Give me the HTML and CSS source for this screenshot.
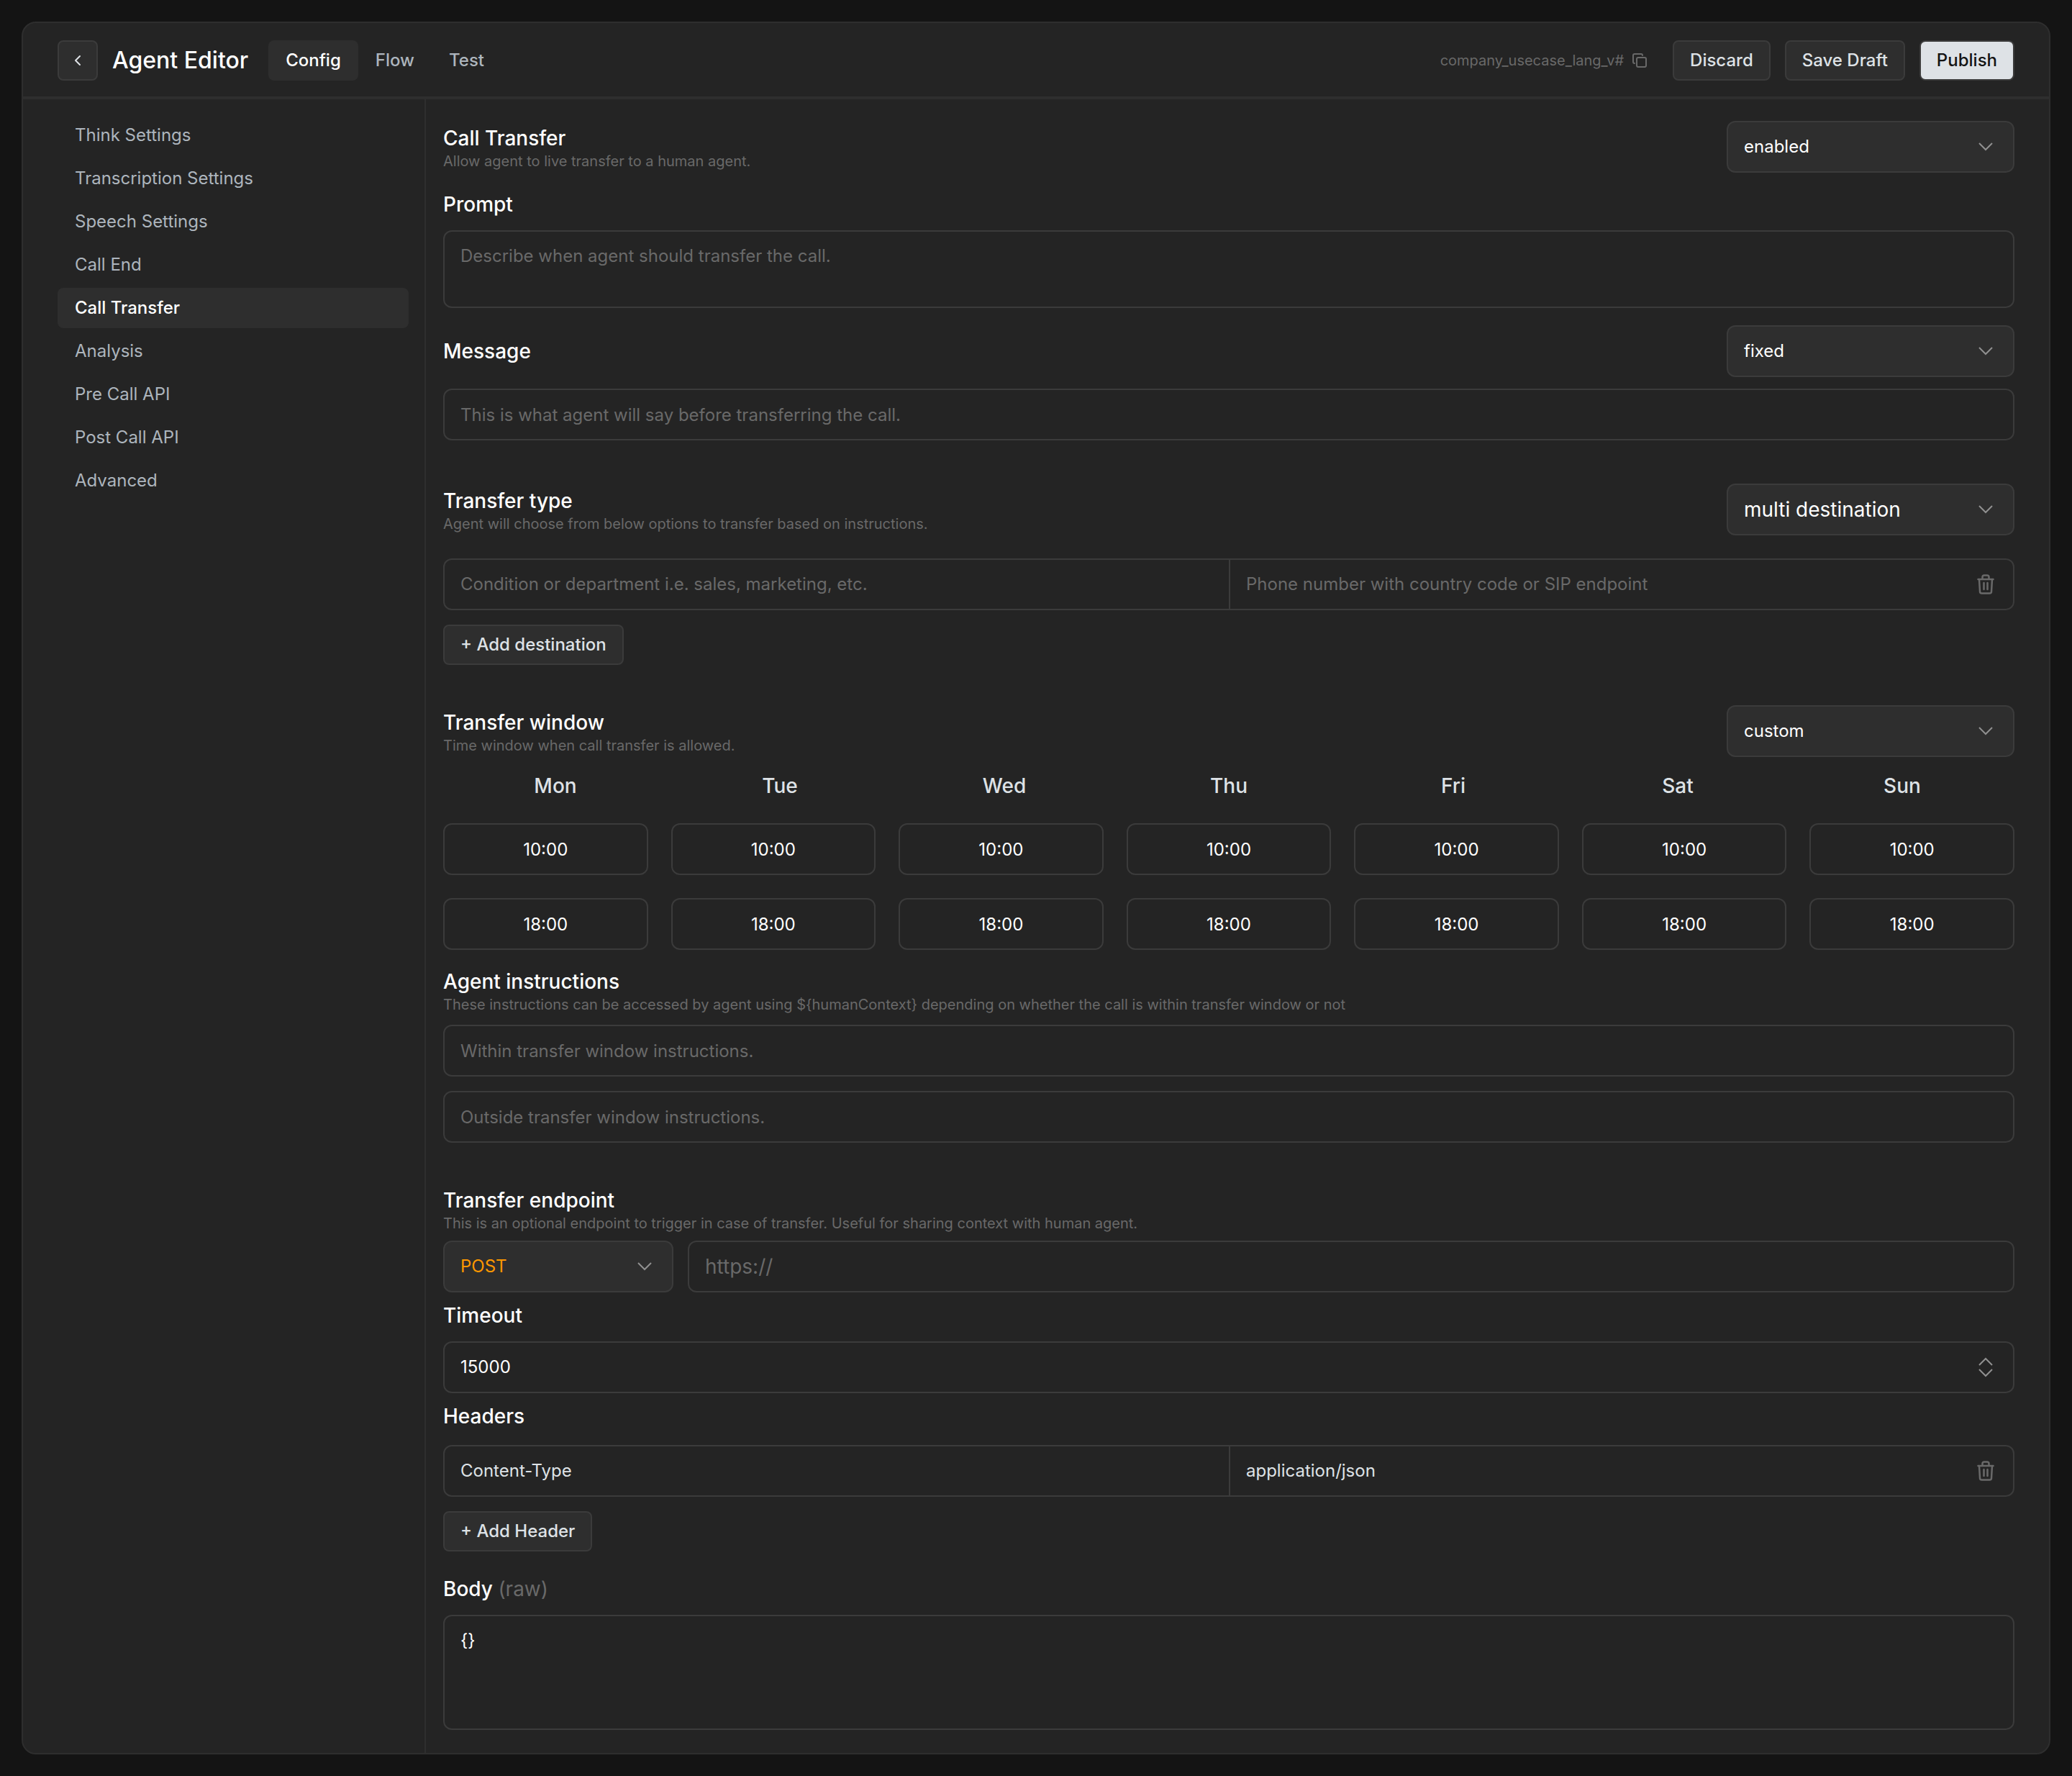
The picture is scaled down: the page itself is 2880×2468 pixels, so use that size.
FILE: index.html
```html
<!DOCTYPE html>
<html lang="en">
<head>
    <meta charset="UTF-8">
    <meta name="viewport" content="width=device-width, initial-scale=1.0">
    <title>Agent Editor</title>
    <link rel="stylesheet" href="styles.css">
</head>
<body>
    <svg class="sprite" aria-hidden="true">
        <symbol id="icon-down" viewBox="0 0 20 12">
            <path d="M1 1l9 9 9-9" />
        </symbol>
        <symbol id="icon-up" viewBox="0 0 20 12">
            <path d="M1 11l9-9 9 9" />
        </symbol>
        <symbol id="icon-trash" viewBox="0 0 24 28">
            <path d="M1.5 7h21M3 7l1 17a2.5 2.5 0 0 0 2.5 2.5h11A2.5 2.5 0 0 0 20 24l1-17M7.5 7V4A2.5 2.5 0 0 1 10 1.500h4A2.500 2.500 0 0 1 16.500 4v3M9.500 12v9M14.500 12v9" />
        </symbol>
    </svg>

    <div class="app">
        <header class="header">
            <button class="btn btn-back" type="button" aria-label="Back">
                <svg class="icon icon-back" viewBox="0 0 10 16"><path d="M8 2L2 8l6 6" /></svg>
            </button>
            <h1 class="header-title">Agent Editor</h1>
            <nav class="tabs">
                <a class="tab active" href="#config">Config</a>
                <a class="tab" href="#flow">Flow</a>
                <a class="tab" href="#test">Test</a>
            </nav>
            <div class="header-actions">
                <span class="agent-id">company_usecase_lang_v#</span>
                <button class="copy-button" type="button" aria-label="Copy">
                    <svg class="icon icon-copy" viewBox="0 0 20 20">
                        <rect x="6" y="6" width="13" height="13" rx="2" />
                        <path d="M3 14a2 2 0 0 1-2-2V3a2 2 0 0 1 2-2h9a2 2 0 0 1 2 2" />
                    </svg>
                </button>
                <button class="btn" type="button">Discard</button>
                <button class="btn" type="button">Save Draft</button>
                <button class="btn btn-primary" type="button">Publish</button>
            </div>
        </header>

        <div class="layout">
            <nav class="sidebar">
                <a class="nav-item" href="#think">Think Settings</a>
                <a class="nav-item" href="#transcription">Transcription Settings</a>
                <a class="nav-item" href="#speech">Speech Settings</a>
                <a class="nav-item" href="#call-end">Call End</a>
                <a class="nav-item active" href="#call-transfer">Call Transfer</a>
                <a class="nav-item" href="#analysis">Analysis</a>
                <a class="nav-item" href="#pre-call">Pre Call API</a>
                <a class="nav-item" href="#post-call">Post Call API</a>
                <a class="nav-item" href="#advanced">Advanced</a>
            </nav>

            <main class="content">
                <section class="section">
                    <div class="row">
                        <div>
                            <label class="label" for="transfer">Call Transfer</label>
                            <p class="hint">Allow agent to live transfer to a human agent.</p>
                        </div>
                        <div class="select">
                            <select class="field" id="transfer">
                                <option>enabled</option>
                                <option>disabled</option>
                            </select>
                            <svg class="icon icon-chevron"><use href="#icon-down" /></svg>
                        </div>
                    </div>
                    <div class="group">
                        <label class="label" for="prompt">Prompt</label>
                        <textarea class="field" id="prompt" rows="2" placeholder="Describe when agent should transfer the call."></textarea>
                    </div>
                    <div class="group">
                        <div class="row">
                            <label class="label" for="message">Message</label>
                            <div class="select">
                                <select class="field" aria-label="Message type">
                                    <option>fixed</option>
                                    <option>dynamic</option>
                                </select>
                                <svg class="icon icon-chevron"><use href="#icon-down" /></svg>
                            </div>
                        </div>
                        <input class="field" id="message" type="text" placeholder="This is what agent will say before transferring the call.">
                    </div>
                </section>

                <section class="section">
                    <div class="row">
                        <div>
                            <label class="label" for="transferType">Transfer type</label>
                            <p class="hint">Agent will choose from below options to transfer based on instructions.</p>
                        </div>
                        <div class="select">
                            <select class="field field-large" id="transferType">
                                <option>multi destination</option>
                                <option>single destination</option>
                            </select>
                            <svg class="icon icon-chevron"><use href="#icon-down" /></svg>
                        </div>
                    </div>
                    <div class="pair pair-spaced">
                        <input class="pair-input" type="text" aria-label="Condition" placeholder="Condition or department i.e. sales, marketing, etc.">
                        <div class="pair-end">
                            <input class="pair-input" type="text" aria-label="Destination" placeholder="Phone number with country code or SIP endpoint">
                            <button class="icon-button" type="button" aria-label="Remove destination">
                                <svg class="icon icon-trash"><use href="#icon-trash" /></svg>
                            </button>
                        </div>
                    </div>
                    <button class="btn btn-add" type="button">+ Add destination</button>
                </section>

                <section class="section section-window">
                    <div class="row">
                        <div>
                            <label class="label" for="transferWindow">Transfer window</label>
                            <p class="hint">Time window when call transfer is allowed.</p>
                        </div>
                        <div class="select">
                            <select class="field" id="transferWindow">
                                <option>custom</option>
                                <option>always</option>
                            </select>
                            <svg class="icon icon-chevron"><use href="#icon-down" /></svg>
                        </div>
                    </div>
                    <div class="days">
                        <span>Mon</span>
                        <span>Tue</span>
                        <span>Wed</span>
                        <span>Thu</span>
                        <span>Fri</span>
                        <span>Sat</span>
                        <span>Sun</span>
                    </div>
                    <div class="times">
                        <input class="field" type="text" value="10:00" aria-label="Mon start">
                        <input class="field" type="text" value="10:00" aria-label="Tue start">
                        <input class="field" type="text" value="10:00" aria-label="Wed start">
                        <input class="field" type="text" value="10:00" aria-label="Thu start">
                        <input class="field" type="text" value="10:00" aria-label="Fri start">
                        <input class="field" type="text" value="10:00" aria-label="Sat start">
                        <input class="field" type="text" value="10:00" aria-label="Sun start">
                        <input class="field" type="text" value="18:00" aria-label="Mon end">
                        <input class="field" type="text" value="18:00" aria-label="Tue end">
                        <input class="field" type="text" value="18:00" aria-label="Wed end">
                        <input class="field" type="text" value="18:00" aria-label="Thu end">
                        <input class="field" type="text" value="18:00" aria-label="Fri end">
                        <input class="field" type="text" value="18:00" aria-label="Sat end">
                        <input class="field" type="text" value="18:00" aria-label="Sun end">
                    </div>
                    <div class="group">
                        <div class="group-title">
                            <h2 class="label">Agent instructions</h2>
                            <p class="hint">These instructions can be accessed by agent using ${humanContext} depending on whether the call is within transfer window or not</p>
                        </div>
                        <div class="stack">
                            <input class="field" type="text" aria-label="Within transfer window" placeholder="Within transfer window instructions.">
                            <input class="field" type="text" aria-label="Outside transfer window" placeholder="Outside transfer window instructions.">
                        </div>
                    </div>
                </section>

                <section class="section">
                    <div>
                        <label class="label" for="endpoint">Transfer endpoint</label>
                        <p class="hint">This is an optional endpoint to trigger in case of transfer. Useful for sharing context with human agent.</p>
                    </div>
                    <div class="endpoint">
                        <div class="select select-method">
                            <select class="field" aria-label="Method">
                                <option>POST</option>
                                <option>GET</option>
                            </select>
                            <svg class="icon icon-chevron"><use href="#icon-down" /></svg>
                        </div>
                        <input class="field field-large" id="endpoint" type="text" placeholder="https://">
                    </div>
                    <div class="group group-tight">
                        <label class="label" for="timeout">Timeout</label>
                        <div class="number">
                            <input class="pair-input" id="timeout" type="number" value="15000">
                            <div class="stepper">
                                <button type="button" aria-label="Increase"><svg class="icon icon-chevron"><use href="#icon-up" /></svg></button>
                                <button type="button" aria-label="Decrease"><svg class="icon icon-chevron"><use href="#icon-down" /></svg></button>
                            </div>
                        </div>
                    </div>
                    <div class="group group-tight headers">
                        <h2 class="label">Headers</h2>
                        <div class="pair">
                            <input class="pair-input" type="text" value="Content-Type" aria-label="Header name">
                            <div class="pair-end">
                                <input class="pair-input" type="text" value="application/json" aria-label="Header value">
                                <button class="icon-button" type="button" aria-label="Remove header">
                                    <svg class="icon icon-trash"><use href="#icon-trash" /></svg>
                                </button>
                            </div>
                        </div>
                        <button class="btn btn-add" type="button">+ Add Header</button>
                    </div>
                    <div class="group group-body">
                        <label class="label" for="body">Body <span class="label-note">(raw)</span></label>
                        <textarea class="field body-field" id="body">{}</textarea>
                    </div>
                </section>
            </main>
        </div>
    </div>
</body>
</html>
```
FILE: styles.css
```css
* {
    margin: 0;
    padding: 0;
    box-sizing: border-box;
}

body {
    min-height: 100vh;
    padding: 30px;
    display: flex;
    flex-direction: column;
    background: #141414;
    color: #fff;
    font-family: Inter, sans-serif;
    font-size: 24px;
    line-height: 36px;
}

button,
input,
select,
textarea {
    font: inherit;
    color: inherit;
}

button {
    cursor: pointer;
}

a {
    color: inherit;
    text-decoration: none;
}

.sprite {
    display: none;
}

.icon {
    fill: none;
    stroke: #696969;
    stroke-width: 2;
    stroke-linecap: round;
    stroke-linejoin: round;
    flex-shrink: 0;
}

.icon-back {
    width: 10px;
    height: 16px;
    stroke: #dee2e6;
}

.icon-copy {
    width: 20px;
    height: 20px;
}

.icon-chevron {
    width: 20px;
    height: 12px;
    stroke: #909090;
    stroke-linecap: butt;
    stroke-linejoin: miter;
}

.icon-trash {
    width: 24px;
    height: 28px;
    stroke-width: 2.5;
}

.app {
    flex: 1;
    display: flex;
    flex-direction: column;
    background: #242424;
    border: 2px solid #2e2e2e;
    border-radius: 20px;
}

/* Header */
.header {
    display: flex;
    align-items: center;
    padding: 24px 48px 22px;
    border-bottom: 2px solid #2e2e2e;
}

.header-title {
    margin: 0 28px 0 20px;
    font-size: 32px;
    font-weight: 500;
}

.tabs {
    display: flex;
}

.tab {
    padding: 10px 24px;
    border-radius: 8px;
    color: #adb5bd;
    font-weight: 500;
}

.tab.active {
    background: #2e2e2e;
    color: #fff;
}

.header-actions {
    margin-left: auto;
    display: flex;
    align-items: center;
    gap: 20px;
}

.agent-id {
    color: #696969;
    font-size: 20px;
}

.copy-button {
    display: flex;
    margin: 0 16px 0 -8px;
    background: none;
    border: none;
}

.btn {
    height: 56px;
    padding: 0 22px;
    background: #2e2e2e;
    border: 2px solid #3b3b3b;
    border-radius: 8px;
    color: #dee2e6;
    font-weight: 500;
}

.btn-back {
    width: 56px;
    padding: 0;
    display: flex;
    align-items: center;
    justify-content: center;
}

.btn-primary {
    background: #dee2e6;
    color: #141414;
}

.btn-add {
    display: block;
}

/* Layout */
.layout {
    flex: 1;
    display: flex;
    border-top: 2px solid #2e2e2e;
}

.sidebar {
    width: 560px;
    flex-shrink: 0;
    padding: 22px 22px 22px 48px;
    display: flex;
    flex-direction: column;
    gap: 4px;
    border-right: 2px solid #2e2e2e;
}

.nav-item {
    padding: 10px 24px;
    border-radius: 8px;
    color: #adb5bd;
}

.nav-item.active {
    background: #2e2e2e;
    color: #fff;
    font-weight: 500;
}

.content {
    flex: 1;
    min-width: 0;
    padding: 30px 48px 32px 24px;
}

.section + .section {
    margin-top: 60px;
}

.section + .section-window {
    margin-top: 56px;
}

.row {
    display: flex;
    align-items: center;
    justify-content: space-between;
}

.label {
    display: block;
    font-size: 28px;
    font-weight: 500;
    line-height: 40px;
}

.label-note {
    color: #696969;
    font-weight: 400;
}

.hint {
    color: #696969;
    font-size: 20px;
    line-height: 24px;
}

/* Form fields */
.field {
    display: block;
    width: 100%;
    height: 72px;
    padding: 0 22px;
    background: transparent;
    border: 2px solid #3b3b3b;
    border-radius: 12px;
    outline: none;
}

.field-large {
    font-size: 28px;
}

textarea.field {
    height: auto;
    padding: 16px 22px;
    resize: none;
}

textarea.body-field {
    height: 160px;
}

::placeholder {
    color: #696969;
    opacity: 1;
}

.select {
    width: 400px;
    display: grid;
    align-items: center;
    flex-shrink: 0;
}

.select > * {
    grid-area: 1 / 1;
}

.select .field {
    background: #2e2e2e;
    appearance: none;
}

.select .icon {
    justify-self: end;
    margin-right: 30px;
    pointer-events: none;
}

.select-method {
    width: 320px;
}

.select-method .field {
    color: #ff9800;
}

.group {
    margin-top: 24px;
}

.group > .label,
.group > .row,
.group-title {
    margin-bottom: 16px;
}

.group-tight {
    margin-top: 12px;
}

.group-body {
    margin-top: 32px;
}

.stack {
    display: flex;
    flex-direction: column;
    gap: 20px;
}

.pair,
.number {
    height: 72px;
    border: 2px solid #3b3b3b;
    border-radius: 12px;
}

.pair {
    display: grid;
    grid-template-columns: 1fr 1fr;
}

.number {
    display: flex;
}

.pair-spaced {
    margin: 32px 0 20px;
}

.pair-end {
    display: flex;
    border-left: 2px solid #3b3b3b;
}

.pair-input {
    flex: 1;
    min-width: 0;
    padding: 0 22px;
    background: transparent;
    border: none;
    outline: none;
    appearance: textfield;
}

.pair-input::-webkit-inner-spin-button {
    display: none;
}

.headers .pair {
    margin: 20px 0;
    color: #dee2e6;
}

.icon-button {
    display: flex;
    align-items: center;
    padding: 0 26px;
    background: none;
    border: none;
}

.stepper {
    display: flex;
    flex-direction: column;
    justify-content: center;
    gap: 4px;
    padding: 0 28px;
}

.stepper button {
    display: flex;
    background: none;
    border: none;
}

.days {
    display: grid;
    grid-template-columns: repeat(7, 1fr);
    margin: 20px 0 32px;
    color: #dee2e6;
    font-size: 28px;
    font-weight: 500;
    line-height: 40px;
    text-align: center;
}

.times {
    display: grid;
    grid-template-columns: repeat(7, 1fr);
    gap: 32px;
}

.times .field {
    text-align: center;
}

.endpoint {
    display: flex;
    gap: 20px;
    margin-top: 12px;
}
```
